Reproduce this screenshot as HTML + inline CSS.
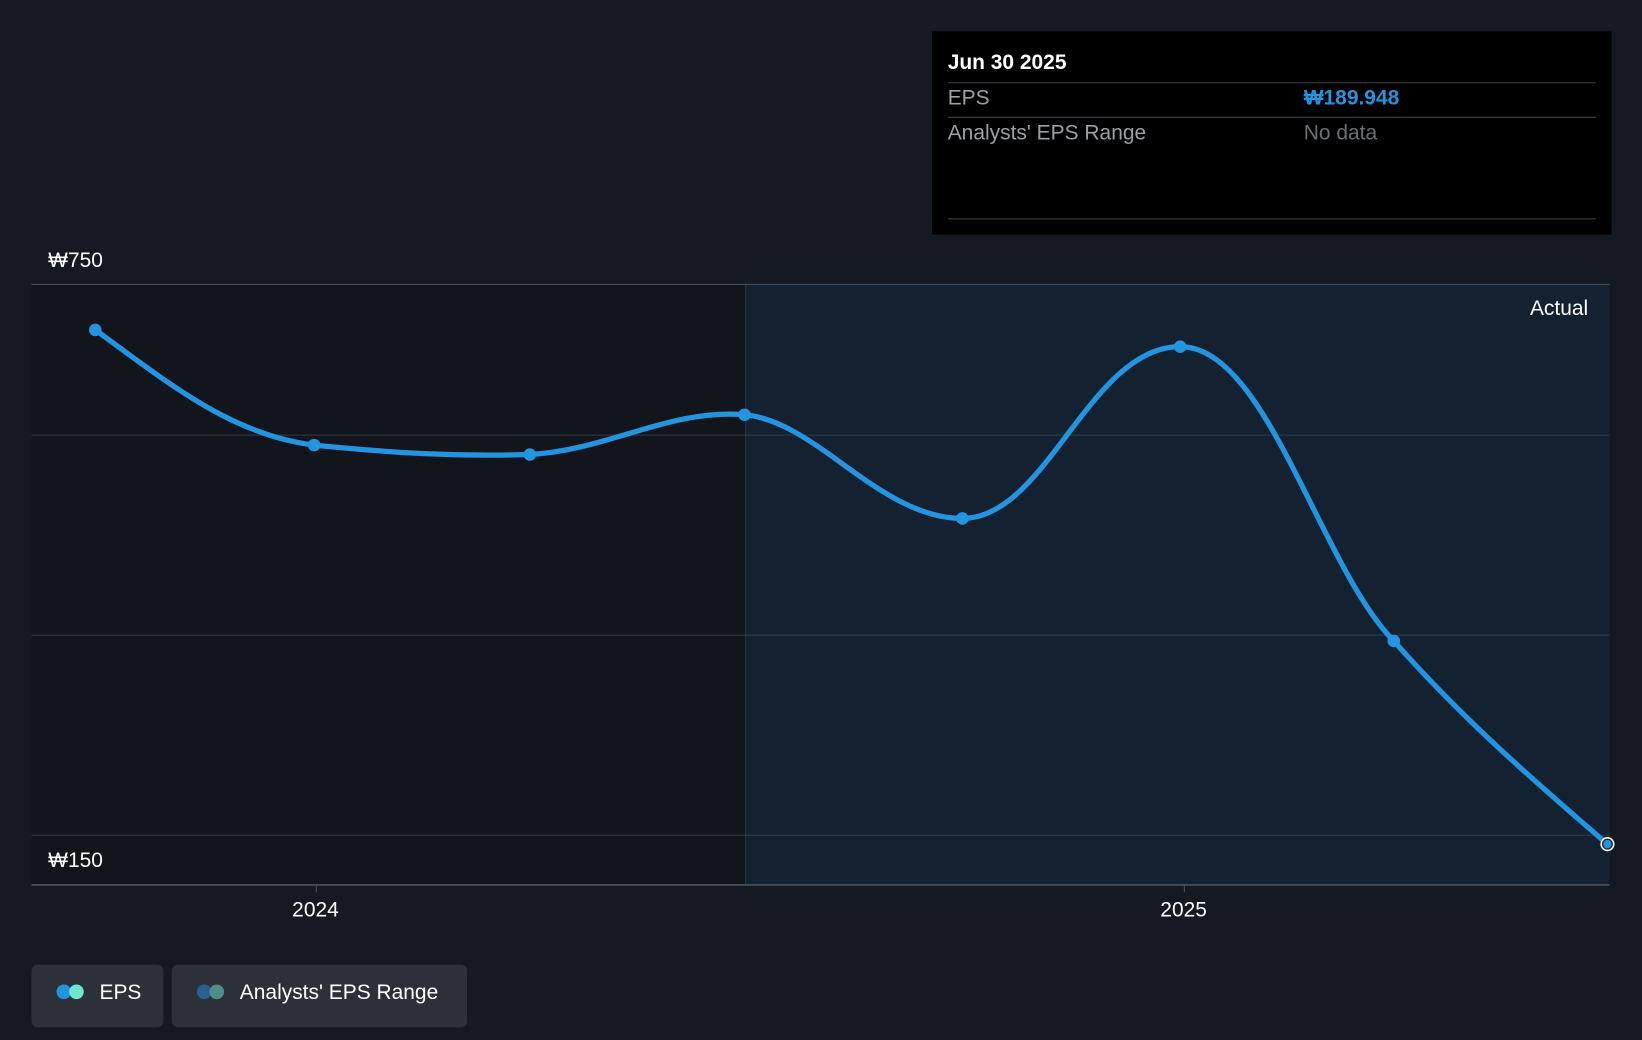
<!DOCTYPE html>
<html><head><meta charset="utf-8"><style>
html,body{margin:0;padding:0;background:#151a22;width:1642px;height:1040px;overflow:hidden;font-family:"Liberation Sans",sans-serif;}
#w{position:absolute;left:0;top:0;width:1568px;height:993px;transform:scale(1.0472,1.0473);transform-origin:0 0;}
.t{position:absolute;color:#fff;font-size:20px;white-space:nowrap;margin-top:1px}
</style></head><body><div id="w">
<svg width="1568" height="993" style="position:absolute;left:0;top:0">
<rect x="30" y="271" width="682" height="574" fill="#12161c"/>
<rect x="712" y="271" width="825" height="574" fill="#132131"/>
<line x1="712" y1="271" x2="712" y2="845" stroke="#2a3440" stroke-width="1"/>
<g stroke="#333b45" stroke-width="1"><line x1="30" y1="271.5" x2="1537" y2="271.5" stroke="#4a525c"/><line x1="30" y1="415.5" x2="1537" y2="415.5"/><line x1="30" y1="606.5" x2="1537" y2="606.5"/><line x1="30" y1="797.5" x2="1537" y2="797.5"/></g>
<line x1="30" y1="845" x2="1537" y2="845" stroke="#4a525c" stroke-width="1.5"/>
<line x1="302" y1="845" x2="302" y2="852" stroke="#4a525c"/><line x1="1131" y1="845" x2="1131" y2="852" stroke="#4a525c"/>
<path d="M91,315 C160,365 220,415 300,425 C380,433 440,436 506,434 C580,430 640,390 711,396 C780,402 840,495 919,495 C1000,495 1040,331 1127,331 C1210,331 1260,540 1331,612 C1400,690 1470,750 1535,806" fill="none" stroke="#2394e0" stroke-width="5"/>
<g fill="#2394e0"><circle cx="91" cy="315" r="6"/><circle cx="300" cy="425" r="6"/><circle cx="506" cy="434" r="6"/><circle cx="711" cy="396" r="6"/><circle cx="919" cy="495" r="6"/><circle cx="1127" cy="331" r="6"/><circle cx="1331" cy="612" r="6"/></g>
<circle cx="1535" cy="806" r="6" fill="#132131" stroke="#fff" stroke-width="1.5"/><circle cx="1535" cy="806" r="4" fill="#2394e0"/>
<rect x="890" y="30" width="649" height="194" fill="#000"/>
<g stroke="#3a3f46"><line x1="905" y1="79" x2="1524" y2="79"/><line x1="905" y1="112" x2="1524" y2="112"/><line x1="905" y1="209" x2="1524" y2="209"/></g>
<rect x="30" y="921" width="126" height="60" rx="6" fill="#2c3039"/>
<rect x="164" y="921" width="282" height="60" rx="6" fill="#2c3039"/>
<circle cx="61" cy="947" r="7" fill="#2394e0"/><circle cx="73" cy="947" r="7" fill="#6ee6d0"/>
<circle cx="195" cy="947" r="7" fill="#28618f"/><circle cx="207" cy="947" r="7" fill="#4f8e88"/>
</svg>
<div class="t" style="left:905px;top:48px;font-weight:bold">Jun 30 2025</div>
<div class="t" style="left:905px;top:82px;color:#9aa0a6">EPS</div>
<div class="t" style="left:1245px;top:82px;color:#2394e0;font-weight:bold">₩189.948</div>
<div class="t" style="left:905px;top:115px;color:#9aa0a6">Analysts' EPS Range</div>
<div class="t" style="left:1245px;top:115px;color:#6a6f75">No data</div>
<div class="t" style="left:46px;top:237px">₩750</div>
<div class="t" style="left:46px;top:810px">₩150</div>
<div class="t" style="left:1461px;top:283px">Actual</div>
<div class="t" style="left:279px;top:857px">2024</div>
<div class="t" style="left:1108px;top:857px">2025</div>
<div class="t" style="left:95px;top:936px">EPS</div>
<div class="t" style="left:229px;top:936px">Analysts' EPS Range</div>
</div></body></html>
